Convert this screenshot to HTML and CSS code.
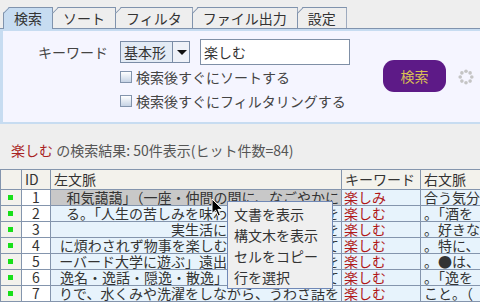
FILE: index.html
```html
<!DOCTYPE html>
<html lang="ja">

<head>
    <meta charset="UTF-8">
    <title>検索</title>
    <link rel="stylesheet" href="styles.css">
</head>

<body>

    <!-- Tab strip -->
    <div class="tabs">
        <div class="tab active">検索</div>
        <div class="tab">ソート</div>
        <div class="tab">フィルタ</div>
        <div class="tab">ファイル出力</div>
        <div class="tab">設定</div>
    </div>

    <!-- Search panel -->
    <div class="panel">
        <div class="form">
            <div class="form-row">
                <span class="label">キーワード</span>
                <div class="combo">
                    <span class="combo-value">基本形</span>
                    <span class="combo-arrow"></span>
                </div>
                <input class="keyword" type="text" value="楽しむ">
            </div>
            <div class="check"><span class="box"></span>検索後すぐにソートする</div>
            <div class="check"><span class="box"></span>検索後すぐにフィルタリングする</div>
        </div>
        <div class="actions">
            <button class="search-btn">検索</button>
            <svg class="spinner" width="16" height="16" viewBox="0 0 16 16">
                <circle cx="8" cy="2.2" r="1.8"/>
                <circle cx="12.1" cy="3.9" r="1.8"/>
                <circle cx="13.8" cy="8" r="1.8"/>
                <circle cx="12.1" cy="12.1" r="1.8"/>
                <circle cx="8" cy="13.8" r="1.8"/>
                <circle cx="3.9" cy="12.1" r="1.8"/>
                <circle cx="2.2" cy="8" r="1.8"/>
                <circle cx="3.9" cy="3.9" r="1.8"/>
            </svg>
        </div>
    </div>

    <div class="summary"><span class="kw">楽しむ</span> の検索結果: 50件表示(ヒット件数=84)</div>

    <!-- Results -->
    <div class="results">
        <div class="row head">
            <div class="cell mark"></div>
            <div class="cell id">ID</div>
            <div class="cell left">左文脈</div>
            <div class="cell kwd">キーワード</div>
            <div class="cell right">右文脈</div>
        </div>
        <div id="rows"></div>

        <div class="menu">
            <div class="menu-item">文書を表示</div>
            <div class="menu-item">構文木を表示</div>
            <div class="menu-item">セルをコピー</div>
            <div class="menu-item">行を選択</div>
        </div>

        <svg class="cursor" width="14" height="20" viewBox="0 0 14 20">
            <path d="M1 1 L1 15.5 L4.6 12.2 L7.2 18 L9.4 17 L6.9 11.4 L11.6 11.4 Z" fill="#000" stroke="#fff" stroke-width="1"/>
        </svg>
    </div>

    <script>
        const results = [
            { left: '和気藹藹」（一座・仲間の間に、なごやかに', kw: '楽しみ', right: '合う気分' },
            { left: 'る。「人生の苦しみを味わいながらも日々を', kw: '楽しむ', right: '。「酒を' },
            { left: '実生活にゆとりと豊かさを', kw: '楽しむ', right: '。好きな' },
            { left: 'に煩わされず物事を楽しむという心を保って', kw: '楽しむ', right: '。特に、' },
            { left: 'ーバード大学に遊ぶ」遠出先で自由な時間を', kw: '楽しむ', right: '。●は、文' },
            { left: '逸名・逸話・隠逸・散逸」など、逸を用いて', kw: '楽しむ', right: '。「逸を' },
            { left: 'りで、水くみや洗濯をしながら、うわさ話を', kw: '楽しむ', right: 'こと。（' }
        ];

        const rows = document.getElementById('rows');
        results.forEach((r, i) => {
            const row = document.createElement('div');
            row.className = 'row' + (i === 0 ? ' hover' : '');
            row.innerHTML =
                '<div class="cell mark"><span class="dot"></span></div>' +
                '<div class="cell id">' + (i + 1) + '</div>' +
                '<div class="cell left"><span>' + r.left + '</span></div>' +
                '<div class="cell kwd">' + r.kw + '</div>' +
                '<div class="cell right">' + r.right + '</div>';
            rows.appendChild(row);
        });
    </script>

</body>

</html>
```

FILE: styles.css
```css
* {
    margin: 0;
    padding: 0;
    box-sizing: border-box;
}

body {
    font-family: "Noto Sans CJK JP", "Noto Sans", sans-serif;
    font-size: 14px;
    color: #333;
    background-color: #eeeeee;
    width: 480px;
    height: 302px;
    overflow: hidden;
}

/* Tabs */
.tabs {
    display: flex;
    align-items: flex-end;
    height: 29px;
    padding-left: 3px;
    border-bottom: 1px solid #8093ad;
}

.tab {
    position: relative;
    height: 21px;
    padding: 0 10px;
    margin-left: -1px;
    line-height: 20px;
    border: 1px solid #8093ad;
    border-bottom: none;
    background-color: #eeeeee;
    clip-path: polygon(6px 0, 100% 0, 100% 100%, 0 100%, 0 6px);
}

.tab::before {
    content: '';
    position: absolute;
    left: -1px;
    top: 5px;
    width: 9px;
    height: 1px;
    background-color: #8093ad;
    transform-origin: 0 0;
    transform: rotate(-45deg);
}

.tab:first-child {
    margin-left: 0;
}

.tab.active {
    height: 22px;
    margin-bottom: -1px;
    background-color: #c7dcf1;
}

/* Search panel */
.panel {
    display: flex;
    height: 95px;
    background-color: #f5f5ff;
    border-top: 2px solid #c7dcf1;
    border-left: 3px solid #c7dcf1;
    border-bottom: 2px solid #c7dcf1;
    padding-top: 8px;
}

.form {
    width: 347px;
}

.form-row {
    display: flex;
    align-items: center;
    height: 26px;
}

.label {
    width: 105px;
    margin-right: 12px;
    text-align: right;
    color: #444;
}

.combo {
    display: flex;
    width: 70px;
    height: 22px;
    margin-right: 10px;
    border: 1px solid #7a8ca6;
}

.combo-value {
    width: 52px;
    line-height: 20px;
    padding-left: 3px;
    background-color: #e3ebf5;
    border-right: 1px solid #7a8ca6;
}

.combo-arrow {
    flex: 1;
    position: relative;
    background-color: #eef1f8;
}

.combo-arrow::after {
    content: '';
    position: absolute;
    left: 4px;
    top: 8px;
    border-left: 5px solid transparent;
    border-right: 5px solid transparent;
    border-top: 5px solid #111;
}

.keyword {
    width: 150px;
    height: 26px;
    padding-left: 3px;
    font-family: inherit;
    font-size: 14px;
    color: #333;
    background-color: white;
    border: 1px solid #7f8fa6;
    outline: none;
}

.check {
    display: flex;
    align-items: center;
    height: 24px;
    margin-left: 117px;
    color: #444;
}

.check:first-of-type {
    margin-top: 2px;
}

.box {
    width: 12px;
    height: 12px;
    margin-right: 4px;
    border: 1px solid #8394ad;
    background: linear-gradient(#ffffff, #c6d3e5);
}

.actions {
    display: flex;
    align-items: center;
    gap: 12px;
    height: 32px;
    margin-top: 21px;
    margin-left: 33px;
}

.search-btn {
    width: 63px;
    height: 32px;
    border: none;
    border-radius: 11px;
    background-color: #5d1a87;
    color: #d9bf55;
    font-family: inherit;
    font-size: 14px;
}

.spinner {
    fill: #c4c4c4;
    margin-top: 2px;
}

/* Summary line */
.summary {
    height: 45px;
    padding: 16px 0 0 11px;
    line-height: 20px;
    color: #555;
}

.summary .kw {
    color: #a82222;
}

/* Results grid */
.results {
    position: relative;
    width: 480px;
    overflow: hidden;
}

.row {
    display: grid;
    grid-template-columns: 22px 29px 291px 79px 59px;
    height: 16px;
    line-height: 15px;
}

.row.head {
    height: 21px;
    line-height: 19px;
    border-top: 1px solid #8495ad;
}

.cell {
    border-right: 1px solid #8495ad;
    border-bottom: 1px solid #8495ad;
    background-color: #e7f3fc;
    white-space: nowrap;
    overflow: hidden;
}

.cell.mark {
    border-left: 1px solid #8495ad;
    background-color: #f3f2ec;
    display: flex;
    align-items: center;
    padding-left: 7px;
}

.dot {
    width: 5px;
    height: 5px;
    background-color: #18e018;
}

.cell.id {
    background-color: white;
    text-align: center;
}

.cell.left {
    display: flex;
    justify-content: flex-end;
    padding-right: 2px;
}

.cell.left span {
    flex-shrink: 0;
}

.cell.kwd {
    color: #b01818;
    padding-left: 2px;
}

.cell.right {
    padding-left: 3px;
    border-right: none;
}

.row.hover .cell.left {
    background-color: #c8c8c8;
}

.head .cell {
    background-color: #f3f2ec;
    color: #333;
    padding-left: 3px;
}

.head .cell.id {
    text-align: left;
}

.head .cell.left {
    justify-content: flex-start;
}

/* Context menu */
.menu {
    position: absolute;
    left: 227px;
    top: 32px;
    width: 106px;
    height: 88px;
    padding-top: 2px;
    background-color: #efefef;
    border: 1px solid #7088b6;
}

.menu-item {
    height: 21px;
    line-height: 21px;
    padding-left: 6px;
    color: #333;
}

.cursor {
    position: absolute;
    left: 211px;
    top: 29px;
}
```
